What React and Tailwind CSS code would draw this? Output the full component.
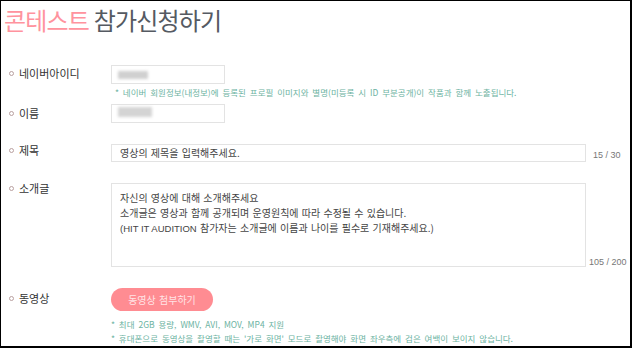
export default function App() {
  const font = { fontFamily: '"Noto Sans CJK KR", "Noto Sans", sans-serif' };
  const Label = ({ children, className = "" }) => (
    <div className={"w-[110px] shrink-0 h-[14px] flex items-center gap-[5px] pl-[8px] text-[11px] leading-[14px] text-[#333] " + className}>
      <span className="w-[5px] h-[5px] rounded-full border border-[#b9a0a0]"></span>
      <span>{children}</span>
    </div>
  );
  const latin = { fontFamily: '"Liberation Sans", sans-serif' };
  return (
    <div className="w-[632px] h-[348px] bg-white overflow-hidden border-t border-l border-r-2 border-b-2 border-black box-border leading-none" style={font}>
      <div className="h-[36px] pl-[3px] pt-[2px] text-[24px] leading-[34px] tracking-[-0.8px]">
        <span className="text-[#ff939e]">콘테스트</span>{" "}
        <span className="text-[#555a62]">참가신청하기</span>
      </div>
      <div className="mt-[28px] h-[19px] flex items-start">
        <Label className="mt-[1px]">네이버아이디</Label>
        <div className="w-[114px] h-[19px] border border-[#e3e3e3] flex items-center pl-[6px]">
          <div className="w-[30px] h-[8px] bg-[#d0d0d0] blur-[1.5px]"></div>
        </div>
      </div>
      <div className="pl-[114px] mt-[2px] h-[12px] text-[8.5px] leading-[12px] text-[#6cb3a2] [word-spacing:2px] whitespace-nowrap">
        * 네이버 회원정보(내정보)에 등록된 프로필 이미지와 별명(미등록 시 ID 부분공개)이 작품과 함께 노출됩니다.
      </div>
      <div className="mt-[6px] h-[19px] flex items-start">
        <Label className="mt-[2px]">이름</Label>
        <div className="w-[114px] h-[19px] border border-[#e3e3e3] flex items-start pt-[2px] pl-[6px]">
          <div className="w-[34px] h-[10px] bg-[#d4d4d4] blur-[1.5px]"></div>
        </div>
      </div>
      <div className="mt-[21px] h-[18px] flex items-start">
        <Label className="-mt-[1px]">제목</Label>
        <div className="w-[475px] h-[18px] border border-[#e3e3e3] flex items-center pl-[8px] text-[10px] text-[#444] [word-spacing:1px]">
          영상의 제목을 입력해주세요.
        </div>
        <div className="ml-[7px] mt-[5px] text-[9px] leading-[12px] text-[#777]" style={latin}>15 / 30</div>
      </div>
      <div className="mt-[21px] h-[84px] flex items-start">
        <Label className="-mt-[2px]">소개글</Label>
        <div className="w-[475px] h-[84px] border border-[#e3e3e3] pl-[8px] pt-[6px] text-[10px] leading-[15px] text-[#444] [word-spacing:1px] whitespace-nowrap">
          <div>자신의 영상에 대해 소개해주세요</div>
          <div>소개글은 영상과 함께 공개되며 운영원칙에 따라 수정될 수 있습니다.</div>
          <div><span style={latin} className="text-[9.5px] [word-spacing:0px]">(HIT IT AUDITION</span> 참가자는 소개글에 이름과 나이를 필수로 기재해주세요.)</div>
        </div>
        <div className="ml-[3px] mt-[73px] text-[9px] leading-[12px] text-[#777]" style={latin}>105 / 200</div>
      </div>
      <div className="mt-[21px] h-[23px] flex items-start">
        <Label className="mt-[3px]">동영상</Label>
        <div className="w-[102px] h-[23px] rounded-full bg-[#ff8c92] text-[#ffe3e5] text-[10px] [word-spacing:1px] flex items-center justify-center">
          동영상 첨부하기
        </div>
      </div>
      <div className="pl-[110px] mt-[6px] text-[8.5px] leading-[14px] text-[#6cb3a2] [word-spacing:2px] whitespace-nowrap">
        <div>* 최대 2GB 용량, WMV, AVI, MOV, MP4 지원</div>
        <div>* 휴대폰으로 동영상을 촬영할 때는 '가로 화면' 모드로 촬영해야 화면 좌우측에 검은 여백이 보이지 않습니다.</div>
      </div>
    </div>
  );
}
